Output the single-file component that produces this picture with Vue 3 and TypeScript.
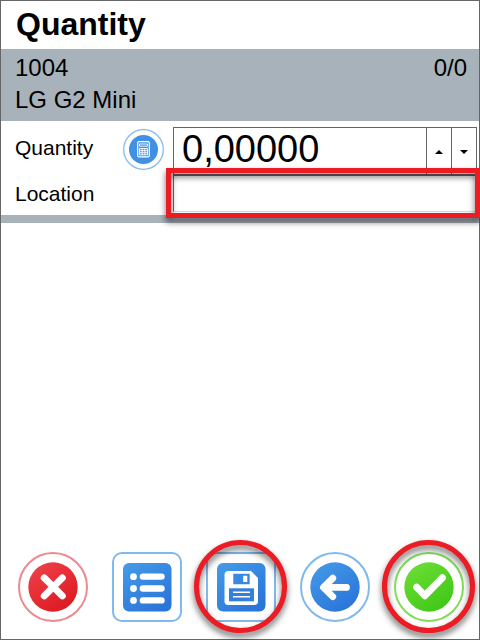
<script setup lang="ts">
import { ref } from 'vue'

const quantity = ref<string>('0,00000')
const location = ref<string>('')

function step(delta: number): void {
  const value = Number(quantity.value.replace(',', '.')) || 0
  quantity.value = Math.max(0, value + delta).toFixed(5).replace('.', ',')
}
</script>

<template>
  <main class="screen">
    <header class="title-bar">
      <h1>Quantity</h1>
    </header>

    <section class="item">
      <div class="item-row">
        <span>1004</span>
        <span>0/0</span>
      </div>
      <div class="item-row">
        <span>LG G2 Mini</span>
      </div>
    </section>

    <form class="fields" @submit.prevent>
      <label class="label" for="quantity">Quantity</label>
      <button class="calculator" type="button" aria-label="Calculator">
        <svg viewBox="0 0 42 42" width="42" height="42" aria-hidden="true">
          <circle cx="20.5" cy="20.5" r="19.8" fill="#fff" stroke="#86bbef" stroke-width="1.3" />
          <circle cx="20.5" cy="20.5" r="14.5" fill="#3f91e4" />
          <rect x="14.7" y="12.7" width="11.6" height="15.2" rx="1.2" fill="none" stroke="#fff" stroke-width="1.2" />
          <path d="M16.5 15h8v2.2h-8zM16.5 19.5h8v6.4h-8zM16.5 21.7h8M16.5 23.8h8M19.2 19.5v6.4M21.9 19.5v6.4" fill="none" stroke="#fff" stroke-width="0.9" />
        </svg>
      </button>
      <div class="spinner">
        <input id="quantity" v-model="quantity" type="text" inputmode="decimal" />
        <button type="button" aria-label="Increase" @click="step(1)">
          <svg viewBox="0 0 8 4" width="8" height="4" aria-hidden="true"><path d="M0 4L4 0L8 4z" /></svg>
        </button>
        <button type="button" aria-label="Decrease" @click="step(-1)">
          <svg viewBox="0 0 8 4" width="8" height="4" aria-hidden="true"><path d="M0 0L4 4L8 0z" /></svg>
        </button>
      </div>

      <label class="label location-label" for="location">Location</label>
      <div class="location">
        <input id="location" v-model="location" type="text" />
        <span class="mark mark-box"></span>
      </div>
    </form>
    <div class="divider"></div>

    <footer class="actions">
      <button type="button" aria-label="Cancel">
        <svg viewBox="0 0 70 70" width="70" height="70" aria-hidden="true">
          <defs>
            <linearGradient id="red" x1="0" y1="0" x2="0.7" y2="1">
              <stop offset="0" stop-color="#f0444c" />
              <stop offset="1" stop-color="#dd1a22" />
            </linearGradient>
          </defs>
          <circle cx="35" cy="35" r="34" fill="#fff" stroke="#ec8a90" stroke-width="2" />
          <circle cx="35" cy="35" r="24.7" fill="url(#red)" />
          <path d="M26.3 25.9L44.3 43.9M44.3 25.9L26.3 43.9" stroke="#fff" stroke-width="7" stroke-linecap="round" />
        </svg>
      </button>

      <button type="button" aria-label="List">
        <svg viewBox="0 0 70 70" width="70" height="70" aria-hidden="true">
          <defs>
            <linearGradient id="blue" x1="0" y1="0" x2="0.7" y2="1">
              <stop offset="0" stop-color="#459ce8" />
              <stop offset="1" stop-color="#2a75da" />
            </linearGradient>
          </defs>
          <rect x="1" y="1" width="68" height="68" rx="9" fill="#fff" stroke="#7fb9ee" stroke-width="2" />
          <rect x="11" y="11" width="48.5" height="48.5" rx="6" fill="url(#blue)" />
          <g fill="#fff">
            <circle cx="21.5" cy="24.7" r="3.4" />
            <circle cx="21.5" cy="36.5" r="3.4" />
            <circle cx="21.5" cy="48.4" r="3.4" />
            <rect x="27.7" y="21.4" width="25" height="6.4" rx="3.2" />
            <rect x="27.7" y="33.3" width="25" height="6.4" rx="3.2" />
            <rect x="27.7" y="45.2" width="25" height="6.4" rx="3.2" />
          </g>
        </svg>
      </button>

      <button type="button" aria-label="Save">
        <svg viewBox="0 0 70 70" width="70" height="70" aria-hidden="true">
          <rect x="1" y="1" width="68" height="68" rx="9" fill="#fff" stroke="#7fb9ee" stroke-width="2" />
          <rect x="11" y="11" width="48.5" height="48.5" rx="6" fill="url(#blue)" />
          <path d="M22.3 19H45L52 26V49.2Q52 53 48.2 53H22.3Q18.5 53 18.5 49.2V22.8Q18.5 19 22.3 19Z" fill="#fff" />
          <path d="M27.3 21.7H43.7V32.3H27.3ZM37.2 23.7V30H41.3V23.7Z" fill="#3988e1" fill-rule="evenodd" />
          <path d="M23 36.3H48V49.3H23Z" fill="#347fdd" />
          <path d="M27 40.3H44M27 44.7H44" stroke="#fff" stroke-width="1.5" />
        </svg>
        <span class="mark mark-ring"></span>
      </button>

      <button type="button" aria-label="Back">
        <svg viewBox="0 0 70 70" width="70" height="70" aria-hidden="true">
          <circle cx="35" cy="35" r="34" fill="#fff" stroke="#7fb9ee" stroke-width="2" />
          <circle cx="35" cy="35" r="24.7" fill="url(#blue)" />
          <path d="M32.8 26.2L23.4 35.4L32.8 44.7M24 35.4H46.5" fill="none" stroke="#fff" stroke-width="6.8" stroke-linecap="round" stroke-linejoin="round" />
        </svg>
      </button>

      <button type="button" aria-label="Confirm">
        <svg viewBox="0 0 70 70" width="70" height="70" aria-hidden="true">
          <defs>
            <linearGradient id="green" x1="0" y1="0" x2="0.7" y2="1">
              <stop offset="0" stop-color="#70df37" />
              <stop offset="1" stop-color="#40c817" />
            </linearGradient>
          </defs>
          <circle cx="35" cy="35" r="34" fill="#fff" stroke="#80dc57" stroke-width="2" />
          <circle cx="35" cy="35" r="24.7" fill="url(#green)" />
          <path d="M22.6 35.2L30.7 43.7L48.4 25.8" fill="none" stroke="#fff" stroke-width="7" stroke-linecap="round" stroke-linejoin="round" />
        </svg>
        <span class="mark mark-ring"></span>
      </button>
    </footer>
  </main>
</template>

<style>
body {
  margin: 0;
  background: #fff;
}
</style>

<style scoped>
.screen {
  box-sizing: border-box;
  display: flex;
  flex-direction: column;
  min-height: 100vh;
  border: 1px solid #666;
  background: #fff;
  color: #000;
  font-family: "Liberation Sans", Arial, sans-serif;
}

button {
  padding: 0;
  border: 0;
  background: none;
  color: inherit;
  cursor: pointer;
}

svg {
  display: block;
}

input {
  box-sizing: border-box;
  min-width: 0;
  margin: 0;
  outline: 0;
  background: #fff;
  color: inherit;
  font-family: inherit;
}

.title-bar {
  padding: 3px 15px 5px;
}

h1 {
  margin: 0;
  font-size: 32px;
  line-height: 40px;
}

.item {
  padding: 3px 12px 5px 14px;
  background: #a8b2ba;
  font-size: 24px;
  line-height: 32px;
}

.item-row {
  display: flex;
  justify-content: space-between;
}

.fields {
  display: grid;
  grid-template-columns: 108px 50px minmax(0, 1fr);
  grid-template-rows: 48px 37px;
  padding: 6px 2px 3px 14px;
}

.label {
  font-size: 21px;
  line-height: 42px;
}

.calculator {
  align-self: start;
  justify-self: start;
  padding-top: 2px;
}

.location-label {
  grid-column: span 2;
  line-height: 37px;
}

.spinner {
  display: flex;
  border: 1px solid #666;
}

.spinner input {
  flex: 1;
  padding: 0 0 4px 8px;
  border: 0;
  font-size: 38px;
}

.spinner button {
  display: flex;
  flex: none;
  align-items: center;
  justify-content: center;
  width: 25px;
  padding-top: 2px;
  border-left: 1px solid #666;
}

.location {
  position: relative;
  display: flex;
}

.location input {
  flex: 1;
  padding: 0 8px;
  border: 1px solid #666;
  border-bottom-color: #ddd;
  font-size: 24px;
}

.divider {
  height: 8px;
  background: #a8b2ba;
}

.actions {
  display: flex;
  justify-content: space-between;
  margin-top: auto;
  padding: 0 15px 17px 17px;
}

.actions button {
  position: relative;
}

.mark {
  position: absolute;
  box-sizing: border-box;
  border: 5px solid #ed1c24;
  filter: drop-shadow(0 4px 3px rgba(0, 0, 0, 0.6));
  pointer-events: none;
}

.mark-box {
  inset: -7px -3px -6px -7px;
}

.mark-ring {
  inset: -12px -11px -11px -12px;
  border-radius: 50%;
}
</style>
